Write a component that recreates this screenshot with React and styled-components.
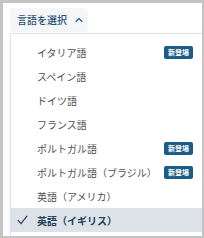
import React from "react";
import styled, { createGlobalStyle } from "styled-components";

const Global = createGlobalStyle`
  html, body { margin: 0; padding: 0; background: #c4c4c4; }
  body { font-family: "Noto Sans CJK JP", "Noto Sans", sans-serif; }
`;

const Frame = styled.div`
  margin: 3px 2px 0 3px;
  width: 199px;
  height: 233px;
  background: #ffffff;
  overflow: hidden;
  padding: 5px 0 0 7px;
  box-sizing: border-box;
  display: flex;
  flex-direction: column;
  align-items: flex-start;
`;

const Trigger = styled.button`
  display: flex;
  align-items: center;
  gap: 8px;
  height: 24px;
  width: 78px;
  flex-shrink: 0;
  padding: 0 5px 0 7px;
  box-sizing: border-box;
  border: none;
  border-radius: 3px;
  background: #f4f6f8;
  color: #1d5075;
  font-family: inherit;
  font-size: 10px;
  font-weight: 500;
  line-height: 1;
  white-space: nowrap;
  cursor: pointer;
`;

const Panel = styled.div`
  align-self: stretch;
  margin-top: 1px;
  margin-right: -6px;
  border: 1px solid #e3e5e7;
  border-right: none;
  border-bottom: none;
  box-shadow: 0 1px 4px rgba(0, 0, 0, 0.08);
  background: #fff;
  padding: 6px 0 4px 0;
  display: flex;
  flex-direction: column;
`;

const Row = styled.div`
  display: flex;
  align-items: center;
  height: 24px;
  padding: 0 15px 0 6px;
  background: ${(p) => (p.$selected ? "#dce2e7" : "transparent")};
  color: ${(p) => (p.$selected ? "#23405a" : "#4f5052")};
  font-size: 10px;
  font-weight: ${(p) => (p.$selected ? 700 : 400)};
`;

const Check = styled.span`
  width: 20px;
  display: flex;
  align-items: center;
`;

const Label = styled.span`
  flex: 1;
  white-space: nowrap;
`;

const Badge = styled.span`
  background: #1b5c86;
  color: #fff;
  font-size: 7px;
  font-weight: 700;
  line-height: 13px;
  height: 13px;
  padding: 0 4px;
  border-radius: 2px;
  white-space: nowrap;
`;

const items = [
  { label: "イタリア語", badge: true },
  { label: "スペイン語" },
  { label: "ドイツ語" },
  { label: "フランス語" },
  { label: "ポルトガル語", badge: true },
  { label: "ポルトガル語（ブラジル）", badge: true },
  { label: "英語（アメリカ）" },
  { label: "英語（イギリス）", selected: true },
];

export default function App() {
  return (
    <>
      <Global />
      <Frame>
        <Trigger>
          <span>言語を選択</span>
          <svg width="10" height="6" viewBox="0 0 10 6" fill="none">
            <path d="M1 5.2 L5 1.2 L9 5.2" stroke="#1d5075" strokeWidth="1.4" />
          </svg>
        </Trigger>
        <Panel>
          {items.map((it) => (
            <Row key={it.label} $selected={it.selected}>
              <Check>
                {it.selected && (
                  <svg width="11" height="10" viewBox="0 0 11 10" fill="none">
                    <path d="M0.8 5.2 L4 8.6 L10.2 0.8" stroke="#23405a" strokeWidth="1.2" />
                  </svg>
                )}
              </Check>
              <Label>{it.label}</Label>
              {it.badge && <Badge>新登場</Badge>}
            </Row>
          ))}
        </Panel>
      </Frame>
    </>
  );
}
